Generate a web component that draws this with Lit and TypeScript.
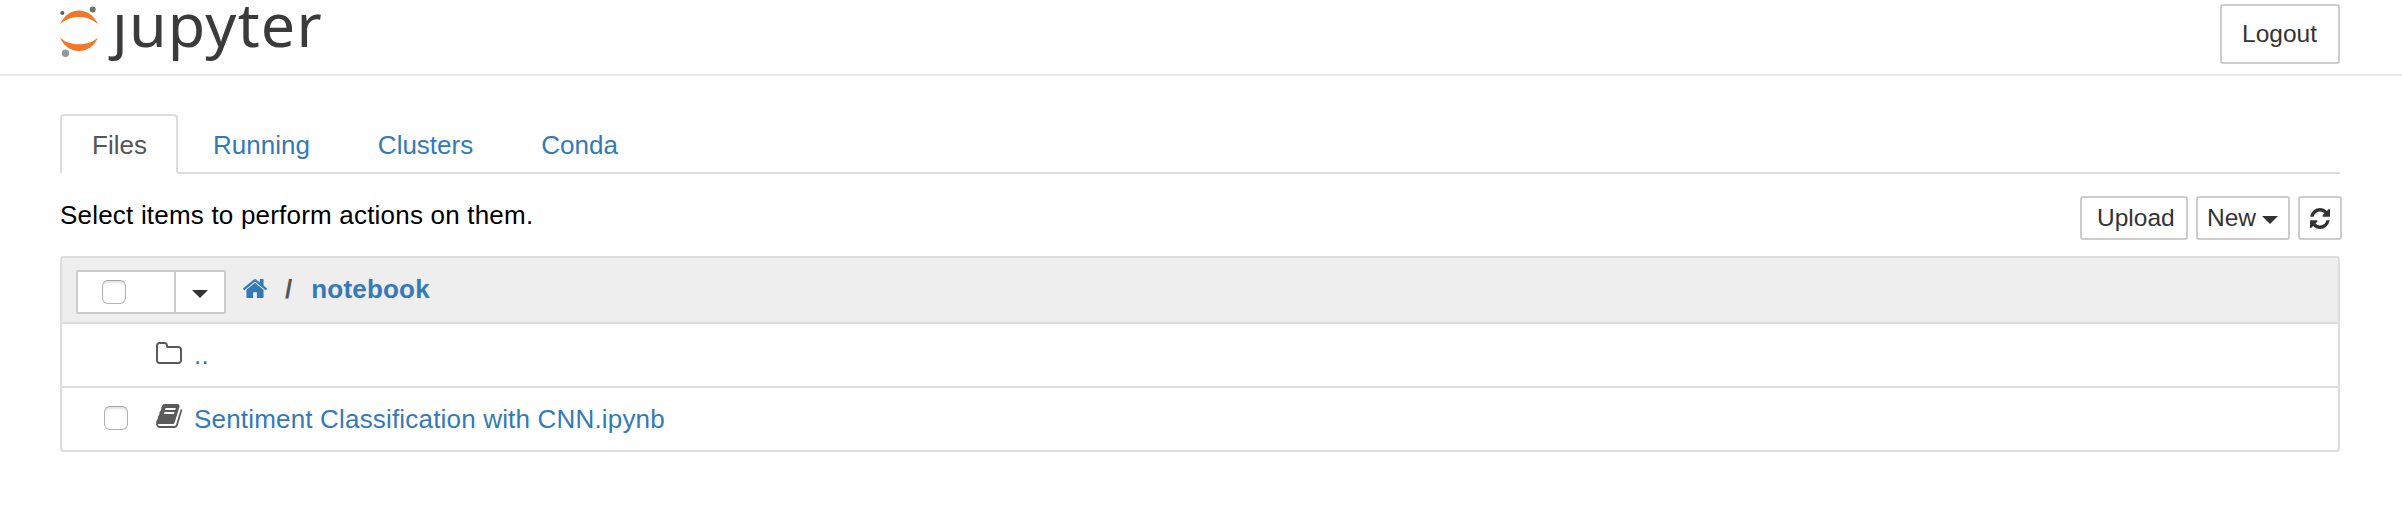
import { LitElement, html, css, svg } from "lit";
import { customElement } from "lit/decorators.js";

const HOME = "M1408 992v480q0 26-19 45t-45 19h-384v-384h-256v384h-384q-26 0-45-19t-19-45v-480q0-1 .5-3t.5-3l575-474 575 474q1 2 1 6zm223-69l-62 74q-8 9-21 11h-3q-13 0-21-7l-692-577-692 577q-12 8-24 7-13-2-21-11l-62-74q-8-10-7-23.5t11-21.5l719-599q32-26 76-26t76 26l244 204v-195q0-14 9-23t23-9h192q14 0 23 9t9 23v408l219 182q10 8 11 21.5t-7 23.5z";
const REFRESH = "M1639 1056q0 5-1 7-64 268-268 434.5t-478 166.5q-146 0-282.5-55t-243.5-157l-129 129q-19 19-45 19t-45-19-19-45v-448q0-26 19-45t45-19h448q26 0 45 19t19 45-19 45l-137 137q71 66 161 102t187 36q134 0 250-65t186-179q11-17 53-117 8-23 30-23h192q13 0 22.5 9.5t9.5 22.5zm25-800v448q0 26-19 45t-45 19h-448q-26 0-45-19t-19-45 19-45l138-138q-148-137-349-137-134 0-250 65t-186 179q-11 17-53 117-8 23-30 23h-199q-13 0-22.5-9.5t-9.5-22.5v-7q65-268 270-434.5t480-166.5q146 0 284 55.5t245 156.5l130-129q19-19 45-19t45 19 19 45z";
const FOLDER = "M1600 1312v-704q0-40-28-68t-68-28h-704q-40 0-68-28t-28-68v-64q0-40-28-68t-68-28h-320q-40 0-68 28t-28 68v960q0 40 28 68t68 28h1216q40 0 68-28t28-68zm128-704v704q0 92-66 158t-158 66h-1216q-92 0-158-66t-66-158v-960q0-92 66-158t158-66h320q92 0 158 66t66 158v32h672q92 0 158 66t66 158z";
const BOOK = "M1703 478q40 57 18 129l-275 906q-19 64-76.5 107.5t-122.5 43.5h-923q-77 0-148.5-53.5t-99.5-131.5q-24-67-2-127 0-4 3-27t4-37q1-8-3-21.5t-3-19.5q2-11 8-21t16.5-23.5 16.5-23.5q23-38 45-91.5t30-91.5q3-10 .5-30t-.5-28q3-11 17-28t17-23q21-36 42-92t25-90q1-9-2.5-32t.5-28q4-13 22-30.5t22-22.5q19-26 42.5-84.5t27.5-96.5q1-8-3-25.5t-2-26.5q2-8 9-18t18-23 17-21q8-12 16.5-30.5t15-35 16-36 19.5-32 26.5-23.5 36-11.5 47.5 5.5l-1 3q38-9 51-9h761q74 0 114 56t18 130l-274 906q-36 119-71.5 153.5t-128.5 34.5h-869q-27 0-38 15-11 16-1 43 24 70 144 70h923q29 0 56-15.5t35-41.5l300-987q7-22 5-57 38 15 59 43zm-1064 2q-4 13 2 22.5t20 9.5h608q13 0 25.5-9.5t16.5-22.5l21-64q4-13-2-22.5t-20-9.5h-608q-13 0-25.5 9.5t-16.5 22.5zm-83 256q-4 13 2 22.5t20 9.5h608q13 0 25.5-9.5t16.5-22.5l21-64q4-13-2-22.5t-20-9.5h-608q-13 0-25.5 9.5t-16.5 22.5z";

// Each icon is cropped to its glyph bounds.
const icon = (name: string, box: string, d: string) =>
  html`<svg class="icon ${name}" viewBox=${box} preserveAspectRatio="none">${svg`<path d=${d}></path>`}</svg>`;

@customElement("app-root")
export class AppRoot extends LitElement {
  static styles = css`
    :host {
      display: block;
      height: 532px;
      background: #fff;
      color: #000;
      font: 26px/36px "Liberation Sans", Arial, sans-serif;
    }
    * { box-sizing: border-box; }
    a { color: #337ab7; text-decoration: none; }
    .icon { display: block; flex: none; fill: currentColor; }
    .text { display: block; white-space: nowrap; }
    .hint { padding-top: 1px; letter-spacing: 0.2px; }

    .header {
      display: flex;
      justify-content: space-between;
      height: 76px;
      padding: 4px 62px 0 60px;
      border-bottom: 2px solid #e7e7e7;
    }
    .logo { display: flex; gap: 13px; }
    .planet { display: block; width: 39px; height: 56px; }
    .wordmark {
      position: relative;
      height: 40px;
      font: 61px/40px "Noto Sans", "Open Sans", sans-serif;
      letter-spacing: 1.2px;
      color: #3b3b3c;
    }
    .wordmark::before {
      content: "";
      position: absolute;
      left: 0;
      top: -4px;
      width: 17px;
      height: 13px;
      background: #fff;
    }

    .btn {
      display: flex;
      align-items: center;
      background: #fff;
      border: 2px solid #ccc;
      border-radius: 3px;
      color: #333;
      font: inherit;
      font-size: 24.5px;
      padding: 0;
      margin: 0;
    }
    .logout { width: 120px; height: 60px; padding-left: 20px; }

    .tabs {
      display: flex;
      height: 60px;
      margin: 38px 62px 0 60px;
      border-bottom: 2px solid #ddd;
    }
    .tab { height: 60px; padding: 11px 30px 0 29px; border: 2px solid transparent; margin-right: 5px; }
    .tab.active {
      width: 118px;
      padding-left: 30px;
      margin-right: 4px;
      border-color: #ddd;
      border-bottom-color: #fff;
      border-radius: 4px 4px 0 0;
      color: #555;
    }

    .toolbar {
      display: flex;
      justify-content: space-between;
      margin: 22px 60px 0 60px;
      height: 44px;
    }
    .toolbar .btn { height: 44px; }
    .actions { display: flex; gap: 8px; }
    .upload { width: 108px; padding-left: 15px; }
    .new { width: 94px; padding-left: 9px; gap: 6px; }
    .reload { width: 44px; justify-content: center; }
    .refresh { width: 20px; height: 21px; }
    .caret {
      flex: none;
      border-left: 8px solid transparent;
      border-right: 8px solid transparent;
      border-top: 8px solid #333;
    }
    .new .caret { margin-top: 4px; }

    .list {
      margin: 16px 62px 0 60px;
      border: 2px solid #ddd;
      border-radius: 4px;
      height: 196px;
    }
    .row { display: flex; height: 64px; border-bottom: 2px solid #ddd; }
    .row.last { height: 62px; border-bottom: 0; }
    .row.head { height: 66px; background: #eee; padding: 12px 14px; color: #555; font-weight: bold; }
    .selector { display: flex; width: 150px; height: 44px; }
    .pick { width: 100px; padding-left: 24px; border-radius: 2px 0 0 2px; }
    .drop { width: 52px; margin-left: -2px; padding-left: 16px; border-radius: 0 2px 2px 0; }
    .drop .caret { margin-top: 4px; }
    .box {
      display: block;
      flex: none;
      width: 24px;
      height: 24px;
      border: 1.5px solid #b4b4b4;
      border-top-color: #a2a2a2;
      border-radius: 6px;
      background: #fff;
      box-shadow: inset 0 2px 2px #e4e4e4;
    }
    .crumbs { display: flex; padding: 1px 0 0 17px; }
    .home { width: 24px; height: 19px; margin-top: 8px; }
    .slash { padding: 0 1px 0 18px; }
    .name { padding-left: 18px; letter-spacing: 0.2px; }
    .item { color: #5a5a5a; }
    .check { width: 94px; padding: 18px 0 0 42px; }
    .glyph { width: 38px; }
    .folder { width: 26px; height: 22px; margin-top: 18px; }
    .book { width: 26px; height: 24px; margin-top: 16px; }
    .label { padding-top: 13px; letter-spacing: 0.18px; }
  `;

  render() {
    return html`
      <header class="header">
        <div class="logo">
          <svg class="planet" viewBox="60 4 39 56">
            <path fill="#f37726" d="M60 24.5C64 15.5 71 10.5 79 10.5S94 15.5 98 24.5C93 19.5 87 17 79 17S65 19.5 60 24.5z"></path>
            <path fill="#f37726" d="M60 37.5C65 42 71 44.3 79 44.3S93 42 98 37.5C94 46.5 87 51 79 51S64 46.5 60 37.5z"></path>
            <circle fill="#616262" cx="62.3" cy="13" r="2.1"></circle>
            <circle fill="#6f7070" cx="92.7" cy="9.4" r="3"></circle>
            <circle fill="#989798" cx="65.5" cy="53.2" r="3.7"></circle>
          </svg>
          <div class="wordmark">jupyter</div>
        </div>
        <button class="btn logout"><span class="text">Logout</span></button>
      </header>
      <nav class="tabs">
        <a class="tab active">Files</a>
        <a class="tab">Running</a>
        <a class="tab">Clusters</a>
        <a class="tab">Conda</a>
      </nav>
      <div class="toolbar">
        <span class="text hint">Select items to perform actions on them.</span>
        <div class="actions">
          <button class="btn upload"><span class="text">Upload</span></button>
          <button class="btn new"><span class="text">New</span><i class="caret"></i></button>
          <button class="btn reload">${icon("refresh", "128 128 1536 1536", REFRESH)}</button>
        </div>
      </div>
      <main class="list">
        <div class="row head">
          <div class="selector">
            <span class="btn pick"><i class="box"></i></span>
            <button class="btn drop"><i class="caret"></i></button>
          </div>
          <div class="crumbs">
            <a>${icon("home", "24 250 1616 1286", HOME)}</a>
            <span class="slash">/</span>
            <a class="name">notebook</a>
          </div>
        </div>
        <div class="row item">
          <div class="check"></div>
          <div class="glyph">${icon("folder", "64 128 1664 1408", FOLDER)}</div>
          <a class="label">..</a>
        </div>
        <div class="row item last">
          <div class="check"><i class="box"></i></div>
          <div class="glyph">${icon("book", "64 128 1664 1536", BOOK)}</div>
          <a class="label">Sentiment Classification with CNN.ipynb</a>
        </div>
      </main>
    `;
  }
}
